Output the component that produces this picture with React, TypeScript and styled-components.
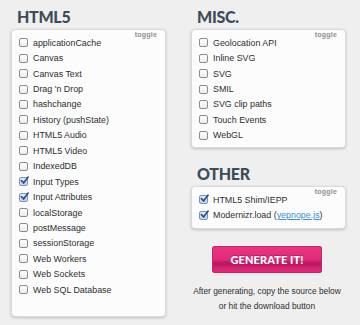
import * as React from 'react';
import styled, { createGlobalStyle } from 'styled-components';

const GlobalStyle = createGlobalStyle`
  html, body {
    margin: 0;
    padding: 0;
    background: #efefef;
  }
  body {
    font-family: 'Liberation Sans', Arial, Helvetica, sans-serif;
    color: #333333;
  }
`;

const Page = styled.div`
  display: grid;
  grid-template-columns: 155px 155px;
  column-gap: 25px;
  padding: 0 14px 0 11px;
  width: 360px;
  height: 325px;
  box-sizing: border-box;
  overflow: hidden;
`;

const Column = styled.div`
  display: flex;
  flex-direction: column;
`;

const Heading = styled.h2<{ $top: number }>`
  margin: ${(p) => p.$top}px 0 2.4px 6px;
  font-family: Lato, 'Open Sans', sans-serif;
  font-weight: 900;
  font-size: 16px;
  line-height: 20px;
  letter-spacing: -0.3px;
  color: #3b4d5a;
`;

const Panel = styled.div<{ $padBottom: number }>`
  position: relative;
  background: #fcfcfc;
  border: 1px solid #dadada;
  border-radius: 4px;
  box-shadow: 0 1px 3px rgba(0, 0, 0, 0.2);
  padding: 5px 0 ${(p) => p.$padBottom}px 7px;
`;

const Toggle = styled.span`
  position: absolute;
  top: 1px;
  right: 8px;
  font-family: 'Liberation Sans', Arial, sans-serif;
  font-size: 7px;
  font-weight: bold;
  color: #8f8f8f;
  letter-spacing: 0.2px;
`;

const Row = styled.label`
  display: flex;
  align-items: center;
  height: 15.44px;
  font-size: 8.9px;
  color: #2e2e2e;
`;

const Box = styled.span<{ $checked: boolean }>`
  display: inline-flex;
  align-items: center;
  justify-content: center;
  width: 7px;
  height: 7px;
  margin-right: 5px;
  border: 1px solid ${(p) => (p.$checked ? '#7f93b3' : '#8c8c8c')};
  border-radius: 2px;
  background: ${(p) => (p.$checked ? 'linear-gradient(#e4ecf8, #c4d4ee)' : 'linear-gradient(#ffffff, #ececec)')};
  position: relative;
`;

const Check = styled.svg`
  position: absolute;
  left: 0px;
  top: -2px;
  width: 9px;
  height: 9px;
`;

const Link = styled.a`
  color: #3a8fd6;
  text-decoration: underline;
`;

const ButtonWrap = styled.div`
  display: flex;
  justify-content: center;
  margin-top: 17px;
  padding-right: 3px;
`;

const GenerateButton = styled.button`
  width: 110px;
  height: 27px;
  border: 1px solid #c81f69;
  border-radius: 2px;
  box-shadow: 0 0 0 1px rgba(255, 255, 255, 0.7), 0 1px 2px rgba(0, 0, 0, 0.15);
  background: linear-gradient(
    #ea3583 0%,
    #e02a7a 50%,
    #c11a62 62%,
    #b8175d 68%,
    #d22170 80%,
    #e2297a 100%
  );
  color: #ffffff;
  font-family: Lato, 'Open Sans', sans-serif;
  font-weight: 900;
  font-size: 11px;
  letter-spacing: 0.1px;
  text-shadow: 0 -1px 0 rgba(120, 0, 50, 0.4);
  padding: 0;
  cursor: pointer;
`;

const Note = styled.p`
  margin: 11px 0 0;
  padding-right: 3px;
  text-align: center;
  font-size: 8.4px;
  line-height: 15.5px;
  color: #2e2e2e;
`;

const html5 = [
  ['applicationCache', false],
  ['Canvas', false],
  ['Canvas Text', false],
  ["Drag 'n Drop", false],
  ['hashchange', false],
  ['History (pushState)', false],
  ['HTML5 Audio', false],
  ['HTML5 Video', false],
  ['IndexedDB', false],
  ['Input Types', true],
  ['Input Attributes', true],
  ['localStorage', false],
  ['postMessage', false],
  ['sessionStorage', false],
  ['Web Workers', false],
  ['Web Sockets', false],
  ['Web SQL Database', false],
] as [string, boolean][];

const misc = [
  'Geolocation API',
  'Inline SVG',
  'SVG',
  'SMIL',
  'SVG clip paths',
  'Touch Events',
  'WebGL',
];

const Checkbox = ({ checked }: { checked: boolean }) => (
  <Box $checked={checked}>
    {checked && (
      <Check viewBox="0 0 10 10">
        <path d="M1.6 5.2 L4 7.8 L9 1.2" fill="none" stroke="#2b4f9e" strokeWidth="1.9" strokeLinecap="round" strokeLinejoin="round" />
      </Check>
    )}
  </Box>
);

const Option = ({ label, checked }: { label: React.ReactNode; checked: boolean }) => (
  <Row>
    <Checkbox checked={checked} />
    <span>{label}</span>
  </Row>
);

export default function App() {
  return (
    <>
      <GlobalStyle />
      <Page>
        <Column>
          <Heading $top={6.6}>HTML5</Heading>
          <Panel $padBottom={19}>
            <Toggle>toggle</Toggle>
            {html5.map(([label, checked]) => (
              <Option key={label} label={label} checked={checked} />
            ))}
          </Panel>
        </Column>
        <Column>
          <Heading $top={6.6}>MISC.</Heading>
          <Panel $padBottom={4}>
            <Toggle>toggle</Toggle>
            {misc.map((label) => (
              <Option key={label} label={label} checked={false} />
            ))}
          </Panel>
          <Heading $top={15.6}>OTHER</Heading>
          <Panel $padBottom={5}>
            <Toggle>toggle</Toggle>
            <Option label="HTML5 Shim/IEPP" checked />
            <Option
              checked
              label={
                <>
                  Modernizr.load (<Link>yepnope.js</Link>)
                </>
              }
            />
          </Panel>
          <ButtonWrap>
            <GenerateButton>GENERATE IT!</GenerateButton>
          </ButtonWrap>
          <Note>
            After generating, copy the source below
            <br />
            or hit the download button
          </Note>
        </Column>
      </Page>
    </>
  );
}
